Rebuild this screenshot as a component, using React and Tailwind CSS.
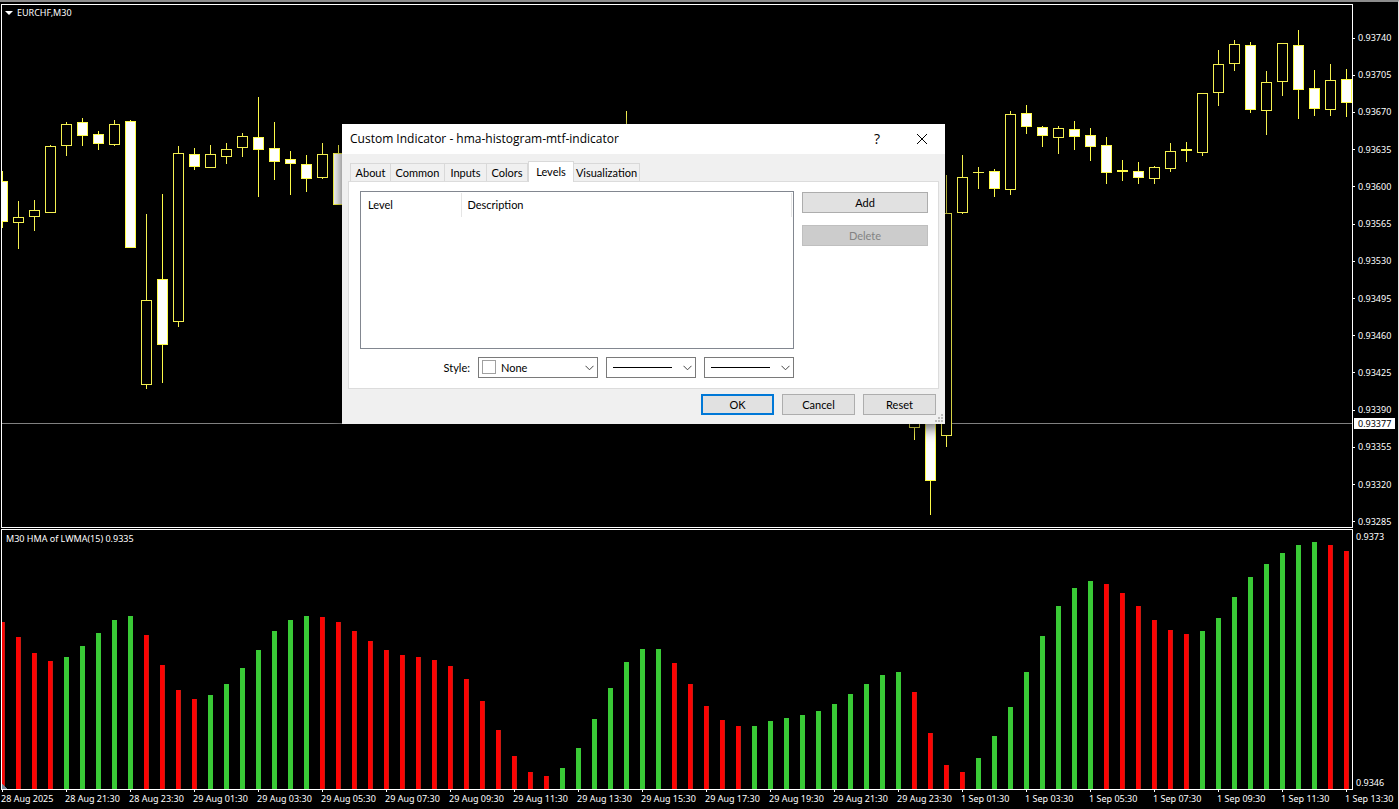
import React, { useState } from 'react';
import clsx from 'clsx';

// [high, bodyTop, bodyBottom, low, filled], null where no bar is visible
const CANDLES = [
    [171, 181, 222, 228, 1], [201, 217, 223, 249, 0], [200, 210, 217, 231, 0], [145, 146, 213, 213, 0],
    [122, 124, 146, 156, 0], [118, 122, 136, 146, 1], [131, 134, 144, 150, 1], [120, 124, 145, 146, 0],
    [120, 121, 248, 248, 1], [214, 300, 385, 389, 0], [194, 279, 345, 383, 1], [146, 153, 322, 327, 0],
    [148, 154, 167, 170, 1], [145, 154, 168, 168, 0], [143, 149, 157, 164, 0], [133, 136, 148, 157, 0],
    [97, 137, 150, 197, 1], [122, 148, 162, 180, 1], [151, 159, 164, 195, 1], [155, 164, 179, 192, 1],
    [143, 154, 178, 179, 0], [145, 153, 205, 205, 1],
    null, null, null, null, null, null, null, null, null, null, null, null, null, null, null, null, null,
    [111, 140, 200, 220, 0],
    null, null, null, null, null, null, null, null, null, null, null, null, null, null, null, null, null,
    [380, 400, 428, 440, 0], [380, 400, 481, 515, 1], [175, 213, 436, 447, 0], [155, 177, 213, 214, 0],
    [167, 172, 173, 189, 0], [169, 171, 189, 197, 1], [111, 114, 190, 195, 0], [105, 113, 127, 134, 1],
    [126, 127, 136, 147, 1], [126, 128, 138, 154, 0], [121, 129, 137, 150, 1], [128, 135, 147, 161, 1],
    [137, 145, 173, 184, 1], [160, 170, 172, 181, 1], [162, 171, 178, 184, 1], [166, 167, 179, 184, 0],
    [143, 151, 169, 172, 0], [142, 149, 151, 162, 1], [93, 93, 153, 156, 0], [50, 64, 93, 106, 0],
    [40, 44, 64, 71, 0], [42, 45, 110, 113, 1], [71, 82, 111, 135, 0], [43, 43, 82, 96, 0],
    [30, 45, 90, 119, 1], [70, 88, 109, 116, 1], [64, 80, 110, 116, 0], [69, 79, 103, 117, 1],
];

// runs of equally coloured histogram bars, each value is the bar's top
const HISTOGRAM = [
    ['down', [622, 637, 653, 661]],
    ['up', [657, 646, 633, 620, 616]],
    ['down', [635, 665, 690, 699]],
    ['up', [695, 684, 668, 650, 631, 620, 616]],
    ['down', [617, 622, 631, 641, 650, 655, 657, 660, 666, 679, 701, 730, 756, 772, 776]],
    ['up', [768, 748, 719, 688, 662, 649, 649]],
    ['down', [663, 684, 706, 720, 726]],
    ['up', [726, 721, 718, 715, 711, 704, 694, 684, 675, 672]],
    ['down', [692, 733, 765, 772]],
    ['up', [758, 736, 707, 672, 636, 606, 588, 581]],
    ['down', [584, 593, 606, 620, 630, 634]],
    ['up', [631, 618, 597, 577, 564, 553, 545, 542]],
    ['down', [545, 551]],
].flatMap(([trend, tops]) => tops.map(top => ({ trend, top })));

const PRICES = [
    '0.93740', '0.93705', '0.93670', '0.93635', '0.93600', '0.93565', '0.93530',
    '0.93495', '0.93460', '0.93425', '0.93390', '0.93355', '0.93320', '0.93285',
];

const TIMES = [
    '28 Aug 2025', '28 Aug 21:30', '28 Aug 23:30', '29 Aug 01:30', '29 Aug 03:30', '29 Aug 05:30',
    '29 Aug 07:30', '29 Aug 09:30', '29 Aug 11:30', '29 Aug 13:30', '29 Aug 15:30', '29 Aug 17:30',
    '29 Aug 19:30', '29 Aug 21:30', '29 Aug 23:30', '1 Sep 01:30', '1 Sep 03:30', '1 Sep 05:30',
    '1 Sep 07:30', '1 Sep 09:30', '1 Sep 11:30', '1 Sep 13:30',
];

const TABS = [
    { name: 'About', width: 'w-[41px]' },
    { name: 'Common', width: 'w-[54px]' },
    { name: 'Inputs', width: 'w-[42px]' },
    { name: 'Colors', width: 'w-[41px]' },
    { name: 'Levels', width: 'w-[46px]' },
    { name: 'Visualization', width: 'w-[66px]' },
];

const barX = index => 2 + index * 16;

const Candle = ({ index, data: [high, top, bottom, low, filled] }) => {
    const x = barX(index);
    return (
        <g fill={filled ? '#fdfb48' : '#f4f050'}>
            <rect x={x} y={high} width="1" height={low - high} />
            <rect x={x - 5} y={top} width="11" height={bottom - top} />
            {bottom - top > 2 && (
                <rect
                    x={x - 4}
                    y={top + 1}
                    width="9"
                    height={bottom - top - 2}
                    fill={filled ? '#ffffff' : '#000000'}
                />
            )}
        </g>
    );
};

const PriceChart = () => (
    <svg
        className="block h-[522px] w-full"
        viewBox="2 5 1350 522"
        preserveAspectRatio="none"
        shapeRendering="crispEdges"
        role="img"
        aria-label="EURCHF M30"
    >
        <rect x="2" y="423" width="1350" height="1" fill="#808080" />
        {CANDLES.map((data, i) => data && <Candle key={i} index={i} data={data} />)}
    </svg>
);

const HistogramChart = () => (
    <svg
        className="block h-[259px] w-full"
        viewBox="2 530 1350 259"
        preserveAspectRatio="none"
        shapeRendering="crispEdges"
        role="img"
        aria-label="HMA histogram"
    >
        {HISTOGRAM.map(({ trend, top }, i) => (
            <g key={i}>
                <rect x={barX(i) - 2} y={top} width="5" height={789 - top} fill={trend === 'up' ? '#39ca36' : '#fc0303'} />
                {trend === 'down' && (
                    <rect x={barX(i) + 2} y={top} width="1" height={789 - top} fill="#c81a12" />
                )}
            </g>
        ))}
        <path d="M2 784 L7 789 H2 Z" fill="#7d8496" />
    </svg>
);

const Chevron = () => (
    <svg
        className="pointer-events-none absolute top-1/2 right-1 -translate-y-1/2"
        width="9"
        height="6"
        viewBox="0 0 9 6"
        fill="none"
        stroke="#444444"
    >
        <path d="M0.5 0.8 L4.5 4.8 L8.5 0.8" />
    </svg>
);

const SELECT_CLASS = 'block h-[21px] w-full appearance-none border border-[#7a7a7a] bg-white outline-none';

const LineSelect = ({ label }) => (
    <div className="relative w-[90px]">
        <select aria-label={label} className={SELECT_CLASS} />
        <div className="pointer-events-none absolute top-[10px] left-[7px] h-px w-[59px] bg-black" />
        <Chevron />
    </div>
);

const PushButton = ({ primary, className, children, ...props }) => (
    <button
        type="button"
        className={clsx(
            'h-[21px] bg-[#e1e1e1] disabled:border-[#bfbfbf] disabled:bg-[#cccccc] disabled:text-[#838383]',
            primary ? 'border-2 border-[#0078d7] leading-[17px]' : 'border border-[#adadad] leading-[19px]',
            className
        )}
        {...props}
    >
        {children}
    </button>
);

const IndicatorDialog = () => {
    const [activeTab, setActiveTab] = useState('Levels');

    return (
        <div
            role="dialog"
            aria-labelledby="dialog-title"
            className="absolute top-[122px] left-[342px] w-[603px] bg-[#f0f0f0] font-['Lato','Liberation_Sans',sans-serif] text-[11px] text-black shadow-[0_3px_14px_rgba(0,0,0,0.7)]"
        >
            <div className="flex h-[30px] items-center bg-white pr-[15px] pl-2 font-['Open_Sans','Noto_Sans',sans-serif] text-[12px]">
                <h1 id="dialog-title" className="flex-1">
                    Custom Indicator - hma-histogram-mtf-indicator
                </h1>
                <button type="button" aria-label="Help" className="mr-[29px] w-4 pb-px text-[14px] leading-5">
                    ?
                </button>
                <button type="button" aria-label="Close" className="flex w-4 justify-center">
                    <svg width="12" height="12" viewBox="0 0 12 12" stroke="#000000" strokeWidth="1">
                        <path d="M1 1 L11 11 M11 1 L1 11" />
                    </svg>
                </button>
            </div>

            <div className="px-[6px] pt-[7px]">
                <div role="tablist" className="flex items-end pl-[2px]">
                    {TABS.map(({ name, width }) => (
                        <button
                            key={name}
                            type="button"
                            role="tab"
                            aria-selected={activeTab === name}
                            onClick={() => setActiveTab(name)}
                            className={clsx(
                                'border-t border-[#d9d9d9] whitespace-nowrap',
                                width,
                                activeTab === name
                                    ? 'relative -mb-px h-[21px] border-x bg-white pb-px'
                                    : 'h-[18px] border-r first:border-l'
                            )}
                        >
                            {name}
                        </button>
                    ))}
                </div>

                <div role="tabpanel" className="border border-[#dcdcdc] bg-white pt-[9px] pr-[10px] pb-[10px] pl-[11px]">
                    <div className="flex gap-2">
                        <div className="h-[158px] flex-1 border border-[#828790] pr-px">
                            <table className="mt-px w-full table-fixed border-collapse text-left">
                                <thead>
                                    <tr className="h-6">
                                        <th className="w-[100px] border-r border-[#e5e5e5] pl-[7px] font-normal">Level</th>
                                        <th className="border-r border-[#e5e5e5] pl-[6px] font-normal">Description</th>
                                    </tr>
                                </thead>
                                <tbody />
                            </table>
                        </div>
                        <div className="flex w-[126px] flex-col gap-3 pt-px">
                            <PushButton>Add</PushButton>
                            <PushButton disabled>Delete</PushButton>
                        </div>
                    </div>
                    <div className="mt-2 mr-[134px] flex items-center justify-end gap-2">
                        <label htmlFor="level-color">Style:</label>
                        <div className="relative w-[120px]">
                            <select id="level-color" className={clsx(SELECT_CLASS, 'pl-[22px]')}>
                                <option>None</option>
                            </select>
                            <span className="pointer-events-none absolute top-[3px] left-1 size-[14px] border border-[#a0a0a0] bg-white" />
                            <Chevron />
                        </div>
                        <LineSelect label="Line style" />
                        <LineSelect label="Line width" />
                    </div>
                </div>
            </div>

            <div className="flex justify-end gap-2 px-[9px] pt-[5px] pb-[9px]">
                <PushButton primary className="w-[73px]">OK</PushButton>
                <PushButton className="w-[73px]">Cancel</PushButton>
                <PushButton className="w-[73px]">Reset</PushButton>
            </div>

            <svg className="absolute right-[2px] bottom-[2px]" width="8" height="8" viewBox="0 0 8 8" fill="#bcbcbc" shapeRendering="crispEdges">
                <path d="M6 0h2v2h-2z M3 3h2v2h-2z M6 3h2v2h-2z M0 6h2v2h-2z M3 6h2v2h-2z M6 6h2v2h-2z" />
            </svg>
        </div>
    );
};

const App = () => (
    <div className="relative min-h-screen overflow-hidden border-t-2 border-r border-t-[#8c8c8c] border-r-[#dcdcdc] bg-black font-['Noto_Sans','Open_Sans',sans-serif] text-[9px] leading-3 text-white">
        <main className="grid grid-cols-[minmax(0,1fr)_45px] gap-y-px pt-[2px] pl-px">
            <section className="relative border border-white">
                <h2 className="absolute top-[2px] left-[3px] flex items-center gap-1">
                    <svg width="8" height="4" viewBox="0 0 8 4" fill="#ffffff">
                        <path d="M0 0 H8 L4 4 Z" />
                    </svg>
                    EURCHF,M30
                </h2>
                <PriceChart />
            </section>
            <div className="relative flex flex-col justify-between pt-7">
                {PRICES.map(price => (
                    <div key={price} className="flex items-center gap-[3px]">
                        <span className="h-px w-[2px] bg-white" />
                        {price}
                    </div>
                ))}
                <div className="absolute top-[414px] left-px w-[41px] bg-white pl-1 leading-[11px] text-black">0.93377</div>
            </div>

            <section className="relative border border-white">
                <h2 className="absolute top-[3px] left-1">M30 HMA of LWMA(15) 0.9335</h2>
                <HistogramChart />
            </section>
            <div className="flex flex-col justify-between pt-[2px] pb-px pl-[3px]">
                <span>0.9373</span>
                <span>0.9346</span>
            </div>
        </main>

        <div className="flex">
            {TIMES.map(time => (
                <div key={time} className="w-16 shrink-0 pl-px whitespace-nowrap">
                    <div className="mb-px ml-px h-[2px] w-px bg-white" />
                    {time}
                </div>
            ))}
        </div>

        <IndicatorDialog />
    </div>
);

export default App;
